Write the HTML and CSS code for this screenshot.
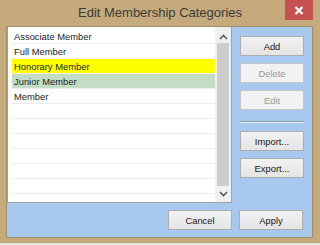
FILE: index.html
```html
<!DOCTYPE html>
<html lang="en">
  <head>
    <meta charset="UTF-8" />
    <title>Edit Membership Categories</title>
    <link rel="stylesheet" href="styles.css">
  </head>
  <body>
    <div class="window">
      <div class="titlebar">
        <span></span>
        <h1 class="title">Edit Membership Categories</h1>
        <button class="close-btn" aria-label="Close">
          <svg width="10" height="9" viewBox="0 0 10 9">
            <path d="M1.5 1 L8.5 8 M8.5 1 L1.5 8" stroke="#ffffff" stroke-width="2.2" />
          </svg>
        </button>
      </div>

      <div class="client">
        <div class="listbox">
          <ul class="rows">
            <li class="row">Associate Member</li>
            <li class="row">Full Member</li>
            <li class="row row-yellow">Honorary Member</li>
            <li class="row row-green">Junior Member</li>
            <li class="row">Member</li>
          </ul>
          <div class="scrollbar">
            <div class="arrow arrow-up">
              <svg width="9" height="6" viewBox="0 0 9 6">
                <polyline points="1,5 4.5,1.5 8,5" fill="none" stroke="#5a5a5a" stroke-width="1.6" />
              </svg>
            </div>
            <div class="track"><div class="thumb"></div></div>
            <div class="arrow">
              <svg width="9" height="6" viewBox="0 0 9 6">
                <polyline points="1,1 4.5,4.5 8,1" fill="none" stroke="#5a5a5a" stroke-width="1.6" />
              </svg>
            </div>
          </div>
        </div>

        <div class="side">
          <button class="btn">Add</button>
          <button class="btn" disabled>Delete</button>
          <button class="btn" disabled>Edit</button>
          <hr class="separator" />
          <button class="btn">Import...</button>
          <button class="btn">Export...</button>
        </div>

        <div class="footer">
          <button class="btn">Cancel</button>
          <button class="btn">Apply</button>
        </div>
      </div>
    </div>
  </body>
</html>
```

FILE: styles.css
```css
:root {
  --frame: #c5aa7b;
  --frame-edge: #a38d66;
  --client: #a8c9ef;
  --text: #1c1c24;
  --grid-line: #ededed;
}

body {
  margin: 0;
  background-color: #e4e4e4;
  font-family: "Liberation Sans", Arial, sans-serif;
}

.window {
  width: 320px;
  height: 243px;
  background-color: var(--frame);
  display: flex;
  flex-direction: column;
}

.titlebar {
  height: 26px;
  display: grid;
  grid-template-columns: 1fr auto 1fr;
  align-items: start;
}

.title {
  margin: 0;
  padding-top: 5px;
  font-size: 13px;
  font-weight: 400;
  line-height: 15px;
  color: #3a3a3a;
}

.close-btn {
  justify-self: end;
  width: 28px;
  height: 20px;
  margin-right: 7px;
  padding: 0;
  border: none;
  background-color: #c75050;
  display: flex;
  align-items: center;
  justify-content: center;
}

.client {
  margin: 0 7px 0 6px;
  height: 210px;
  border: 1px solid var(--frame-edge);
  background-color: var(--client);
  display: grid;
  grid-template-columns: 225px 80px;
  grid-template-rows: 176px 1fr;
}

.listbox {
  box-sizing: border-box;
  border: 1px solid #9da3ab;
  border-top: none;
  background-color: #ffffff;
  display: flex;
}

.rows {
  flex: 1;
  margin: 0;
  padding: 2px 0 0 4px;
  list-style: none;
  background-image: repeating-linear-gradient(
    to bottom,
    transparent 0,
    transparent 14px,
    var(--grid-line) 14px,
    var(--grid-line) 15px
  );
  background-clip: content-box;
  background-origin: content-box;
}

.row {
  height: 15px;
  padding: 2px 0 0 2px;
  font-size: 9.4px;
  line-height: 12px;
  color: var(--text);
  background-color: #ffffff;
  border-bottom: 1px solid var(--grid-line);
  box-sizing: border-box;
}

.row-yellow {
  background-color: #ffff00;
}

.row-green {
  background-color: #c3dcc4;
}

.scrollbar {
  width: 16px;
  background-color: #f0f0f0;
  display: flex;
  flex-direction: column;
}

.arrow {
  height: 16px;
  display: flex;
  align-items: center;
  justify-content: center;
}

.arrow-up {
  padding-top: 3px;
  box-sizing: border-box;
}

.track {
  flex: 1;
  display: flex;
  padding: 0 2px;
}

.thumb {
  flex: 1;
  background-color: #cdcdcd;
}

.side {
  padding: 9px 8px 0 8px;
  display: flex;
  flex-direction: column;
  gap: 7px;
}

.separator {
  margin: 4px 0 1px 0;
  height: 0;
  border: none;
  border-top: 1px solid #8e9aa8;
  border-bottom: 1px solid #e6eef8;
}

.footer {
  grid-column: 1 / 3;
  padding: 7px 9px 0 0;
  display: flex;
  justify-content: flex-end;
  align-items: flex-start;
  gap: 7px;
}

.btn {
  width: 64px;
  height: 20px;
  padding: 0;
  border: 1px solid #adadad;
  background: linear-gradient(#f2f2f2, #e4e4e4);
  font-family: "Liberation Sans", Arial, sans-serif;
  font-size: 9.4px;
  color: #161616;
}

.btn:disabled {
  border-color: #c6c6c6;
  background: #f2f2f2;
  color: #9a9a9a;
}
```
